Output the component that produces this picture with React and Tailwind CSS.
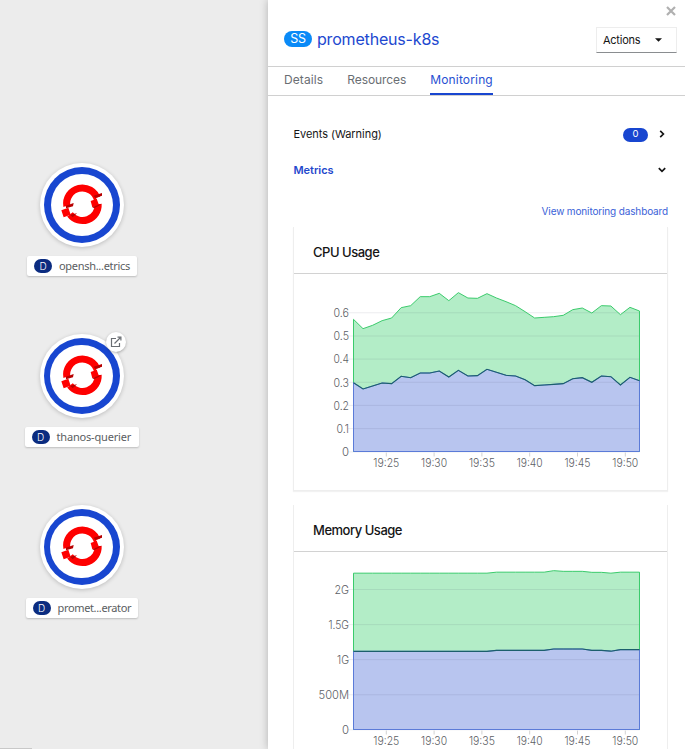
import React from 'react';

const cpuTop = [118, 146, 136, 122, 114, 83, 77, 50, 50, 40, 62, 38, 54, 55, 41, 54, 65, 77, 95, 114, 112, 110, 106, 89, 84, 99, 77, 78, 104, 82, 93].map((v) => 280 + v / 3);
const cpuLow = [308, 327, 318, 309, 311, 289, 293, 279, 279, 273, 291, 271, 288, 287, 268, 277, 286, 288, 299, 317, 315, 313, 311, 296, 293, 307, 288, 290, 315, 292, 302].map((v) => 280 + v / 3);
const memTop = [249.5, 249.5, 249.5, 249.5, 249.5, 249.5, 249.5, 249.5, 249.5, 249.5, 249.5, 249.5, 249.5, 249.5, 249.5, 246.5, 246.5, 246.5, 246.5, 246.5, 246.5, 242, 244, 244, 244, 247, 247, 249.5, 246.5, 246.5, 246.5].map((v) => 490 + v / 3);
const memLow = [484, 484, 484, 484, 484, 484, 484, 484, 484, 484, 484, 484, 484, 484, 484, 481, 481, 481, 481, 481, 481, 477, 477, 477, 477, 481, 481, 483.5, 479, 479, 479].map((v) => 490 + v / 3);

const times = ['19:25', '19:30', '19:35', '19:40', '19:45', '19:50'];

function Chart({ top, low, base, origin, height, ticks }) {
  const pts = (a) => a.map((y, i) => `${(59.5 + i * 9.533).toFixed(2)},${(y - origin).toFixed(2)}`).join(' L');
  const b = base - origin;
  const t = `M59.5,${b} L${pts(top)} L345.5,${b} Z`;
  const l = `M59.5,${b} L${pts(low)} L345.5,${b} Z`;
  const band = `M${pts(top)} L345.5,${low[30] - origin} L${pts(low).split(' L').reverse().join(' L')} Z`;
  return (
    <svg width="373" height={height} viewBox={`0 0 373 ${height}`} className="block font-[Inter,sans-serif] font-light">
      <path d={band} fill="#b3edc7" />
      <path d={l} fill="#b8c5ef" />
      {ticks.map(([label, y, w]) => (
        <g key={label}>
          <line x1="54" x2="345.5" y1={y - origin} y2={y - origin} stroke="#30304a" strokeOpacity=".09" />
          <text x="55" y={y - origin + 4.3} fontSize="11" textAnchor="end" textLength={w} lengthAdjust="spacingAndGlyphs" fill="#5c6065">{label}</text>
        </g>
      ))}
      <path d={t} fill="none" stroke="#3bcb6c" strokeWidth="1" />
      <path d={l} fill="none" stroke="#5b7bd8" strokeWidth="1" />
      <path d={`M${pts(low)}`} fill="none" stroke="#1c5f6c" strokeWidth="1.1" />
      {times.map((s, i) => (
        <g key={s}>
          <line x1={92.3 + i * 47.8} x2={92.3 + i * 47.8} y1={b + 1} y2={b + 5} stroke="#d2d2d2" />
          <text x={92.3 + i * 47.8} y={b + 15.5} fontSize="11" textAnchor="middle" textLength="26" lengthAdjust="spacingAndGlyphs" fill="#5c6065">{s}</text>
        </g>
      ))}
    </svg>
  );
}

function Ring() {
  return (
    <svg viewBox="0 0 144 138" className="h-[46px] w-[48px]">
      <path d="M26.5 73A47 47 0 0 1 118 52" fill="none" stroke="#fe0000" strokeWidth="21" />
      <path d="M120.500 66A47 47 0 0 1 36 97" fill="none" stroke="#fe0000" strokeWidth="21" />
      <path d="M114 48L134 41V63L121 67Z" fill="#fff" />
      <path d="M10 83V76L46 70L30 79L37 98L15 105Z" fill="#fff" />
      <path d="M98 57L116 50L123 69L103 76ZM10 85L31 77L38 98L17 106Z" fill="#fe0000" />
      <path d="M107 41L132 33V41L112 48ZM103 75L131 65L122 72L108 79ZM24 71L47 63L45 73L24 79ZM36 98L57 94L44 106Z" fill="#b80000" />
    </svg>
  );
}

function Node({ name, pos, labelWidth, textClass, link }) {
  return (
    <div className={`absolute flex w-[120px] flex-col items-center ${pos}`}>
      <div className="relative flex size-[84px] items-center justify-center rounded-full bg-white shadow-[0_1px_4px_rgba(0,0,0,.2)]">
        <div className="size-[76px] rounded-full bg-[#1846d0] p-[6.600px]">
          <div className="flex size-full items-center justify-center rounded-full bg-white">
            <Ring />
          </div>
        </div>
        {link && (
          <div className="absolute -right-[2px] -top-[2px] flex size-[20px] items-center justify-center rounded-full bg-white shadow-[0_1px_3px_rgba(0,0,0,.3)]">
            <svg viewBox="0 0 12 12" className="size-[12px]" fill="none" stroke="#6a6e73" strokeWidth="1.200">
              <path d="M6 2.500H1.500V10.500H9.500V7M4.500 7.500L10 2M7.500 1.200H10.900V4.600" />
            </svg>
          </div>
        )}
      </div>
      <div className={`mt-[9px] flex h-[20px] shrink-0 items-center rounded-[2px] bg-white pl-[7px] shadow-[0_1px_2px_rgba(0,0,0,.2)] ${labelWidth}`}>
        <span className="flex h-[14px] w-[18px] shrink-0 items-center justify-center rounded-full bg-[#0b2c80] text-[10px] font-light text-white">D</span>
        <span className={`ml-[7px] whitespace-nowrap font-['Noto_Sans',sans-serif] text-[11px] text-[#5a5d61] ${textClass}`}>{name}</span>
      </div>
    </div>
  );
}

function Card({ title, width, children, className }) {
  return (
    <section className={`border-x border-[#eeeeee] ${className}`}>
      <h2 className="flex h-[47px] items-center border-b border-[#d2d2d2] pl-[19px] pt-[6px] text-[13px] font-medium text-[#151515]">
        <span className={width}>{title}</span>
      </h2>
      {children}
    </section>
  );
}

export default function App() {
  return (
    <div className="flex h-[749px] w-[685px] overflow-hidden bg-[#ececec] font-[Inter,sans-serif]">
      <div className="relative w-[268px] shrink-0">
        <Node name="opensh...etrics" pos="left-[22px] top-[163px]" labelWidth="w-[110px]" textClass="tracking-[-0.300px]" />
        <Node name="thanos-querier" pos="left-[21.500px] top-[334px]" labelWidth="w-[114px]" textClass="tracking-[-0.180px]" link />
        <Node name="promet...erator" pos="left-[21.500px] top-[505px]" labelWidth="w-[112px]" textClass="tracking-[-0.350px]" />
        <div className="absolute bottom-0 left-0 h-px w-[32px] bg-[#c8c8c8]" />
      </div>
      <aside className="relative flex h-full w-[417px] shrink-0 flex-col bg-white shadow-[0_0_8px_rgba(0,0,0,.25)]">
        <header className="flex h-[66px] justify-between pl-[16px] pr-[8px]">
          <div className="flex h-[24px] items-center self-start pt-[54px]">
            <span className="-mt-[30px] flex h-[16px] w-[28px] items-center justify-center rounded-full bg-[#0a8af7] text-[12.500px] tracking-[-0.2px] text-white">SS</span>
            <h1 className="-mt-[31px] ml-[5px] whitespace-nowrap text-[16px] tracking-[-0.180px] text-[#2148cf]">prometheus-k8s</h1>
          </div>
          <div className="flex flex-col items-end">
            <svg viewBox="0 0 10 10" className="mr-[1px] mt-[6px] size-[10px]" stroke="#b0b0b0" strokeWidth="2.200" fill="none"><path d="M1 1L9 9M9 1L1 9" /></svg>
            <button className="mt-[11px] flex h-[26px] w-[81px] items-center justify-between border border-b-[#8a8d90] border-[#ededed] pl-[6px] pr-[14px] text-[11px] tracking-[-0.250px] text-[#151515]">
              Actions
              <svg viewBox="0 0 8 4" className="h-[4px] w-[7px]"><path d="M0 0H8L4 4Z" fill="#151515" /></svg>
            </button>
          </div>
        </header>
        <nav className="flex h-[30px] gap-[24px] border-y border-[#d0d0d0] pl-[16px] text-[12px] leading-[26px] text-[#6a6e73]">
          <span className="tracking-[0.1px]">Details</span>
          <span className="tracking-[-0.070px]">Resources</span>
          <span className="h-[28px] border-b-2 border-[#1846d0] tracking-[0.150px] text-[#2850d2]">Monitoring</span>
        </nav>
        <main className="flex flex-col pl-[25px] pr-[17px]">
          <div className="mt-[28px] flex h-[20px] items-center text-[11px] text-[#151515]">
            <span className="flex-1 pl-[0.500px] tracking-[-0.050px]">Events (Warning)</span>
            <span className="mr-[10px] mt-[1px] flex h-[14px] w-[25px] items-center justify-center rounded-full bg-[#1846d0] text-[9.500px] text-white">0</span>
            <svg viewBox="0 0 8 8" className="mr-[2px] size-[8px]" fill="none" stroke="#151515" strokeWidth="1.700"><path d="M2.200 .8L5.400 4L2.200 7.200" /></svg>
          </div>
          <div className="mt-[16px] flex h-[20px] items-center justify-between text-[11px] font-semibold text-[#1f48cc]">
            <span className="pl-[0.500px] tracking-[-0.050px]">Metrics</span>
            <svg viewBox="0 0 8 8" className="mr-[2px] size-[8px]" fill="none" stroke="#151515" strokeWidth="1.700"><path d="M.8 2.200L4 5.400L7.200 2.200" /></svg>
          </div>
          <a className="mt-[23px] self-end whitespace-nowrap text-[10px] leading-[17px] tracking-[-0.140px] text-[#3b62d8]">View monitoring dashboard</a>
          <Card title="CPU Usage" width="tracking-[-0.480px]" className="mt-[7px] h-[264px] border-b shadow-[0_1px_1px_rgba(0,0,0,.05)]">
            <Chart top={cpuTop} low={cpuLow} base={451.500} origin={274} height={214} ticks={[['0.6', 312.8, 15.5], ['0.5', 336, 15.5], ['0.4', 359.1, 15.5], ['0.3', 382.3, 15.5], ['0.2', 405.4, 15.5], ['0.1', 428.6, 12.5], ['0', 451.9, 7]]} />
          </Card>
          <Card title="Memory Usage" width="tracking-[-0.480px]" className="mt-[14px] h-[244px]">
            <Chart top={memTop} low={memLow} base={729.500} origin={552} height={197} ticks={[['2G', 589.5, 14.5], ['1.5G', 624.6, 20.5], ['1G', 659.6, 12], ['500M', 694.8, 30.5], ['0', 729.8, 7]]} />
          </Card>
        </main>
      </aside>
    </div>
  );
}
